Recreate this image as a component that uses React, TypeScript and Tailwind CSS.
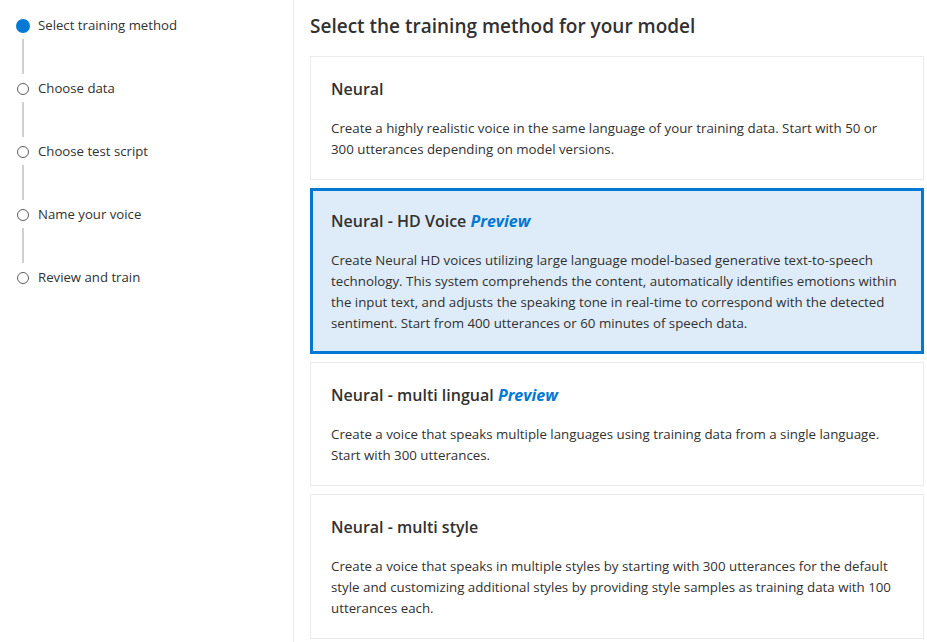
const steps = [
  "Select training method",
  "Choose data",
  "Choose test script",
  "Name your voice",
  "Review and train",
];

const methods = [
  {
    title: "Neural",
    preview: false,
    lines: [
      "Create a highly realistic voice in the same language of your training data. Start with 50 or",
      "300 utterances depending on model versions.",
    ],
  },
  {
    title: "Neural - HD Voice",
    preview: true,
    lines: [
      "Create Neural HD voices utilizing large language model-based generative text-to-speech",
      "technology. This system comprehends the content, automatically identifies emotions within",
      "the input text, and adjusts the speaking tone in real-time to correspond with the detected",
      "sentiment. Start from 400 utterances or 60 minutes of speech data.",
    ],
  },
  {
    title: "Neural - multi lingual",
    preview: true,
    lines: [
      "Create a voice that speaks multiple languages using training data from a single language.",
      "Start with 300 utterances.",
    ],
  },
  {
    title: "Neural - multi style",
    preview: false,
    lines: [
      "Create a voice that speaks in multiple styles by starting with 300 utterances for the default",
      "style and customizing additional styles by providing style samples as training data with 100",
      "utterances each.",
    ],
  },
];

export default function App() {
  const selected = 1;

  return (
    <div className="flex h-[642px] w-[927px] overflow-hidden bg-white font-['Open_Sans',sans-serif] text-[#323130]">
      {/* Wizard steps */}
      <aside className="w-[294px] shrink-0 border-r border-[#edebe9] pl-4 pt-4">
        {steps.map((step, i) => (
          <div key={step}>
            <div className="flex h-5 items-center gap-2">
              <div className="flex w-[14px] justify-center">
                {i === 0 ? (
                  <span className="h-[14px] w-[14px] rounded-full bg-[#0078d4]" />
                ) : (
                  <span className="h-3 w-3 rounded-full border border-[#605e5c]" />
                )}
              </div>
              <span className="text-[13.2px]">{step}</span>
            </div>
            {i < steps.length - 1 && (
              <div className="flex w-[14px] justify-center pt-[3px] pb-[5px]">
                <div className="h-[35px] w-[2px] bg-[#d2d0ce]" />
              </div>
            )}
          </div>
        ))}
      </aside>

      {/* Main */}
      <main className="flex-1 pl-4 pr-[3px] pt-[13px]">
        <h1 className="mb-[17px] text-[19px] leading-[26px] font-semibold">
          Select the training method for your model
        </h1>
        <div className="flex flex-col gap-2">
          {methods.map((m, i) => (
            <div
              key={m.title}
              className={
                i === selected
                  ? "border-[3px] border-[#0078d4] bg-[#deecf9] px-[18px] pt-[19px] pb-[17px]"
                  : "border border-[#edebe9] bg-white px-5 pt-[21px] pb-[19px]"
              }
            >
              <div className="text-[16px] leading-[22px] font-semibold">
                {m.title}
                {m.preview && <span className="italic font-bold text-[#0078d4]"> Preview</span>}
              </div>
              <div className="mt-[18px] text-[13.3px] leading-[21px]">
                {m.lines.map((l) => (
                  <div key={l} className="whitespace-nowrap">
                    {l}
                  </div>
                ))}
              </div>
            </div>
          ))}
        </div>
      </main>
    </div>
  );
}
